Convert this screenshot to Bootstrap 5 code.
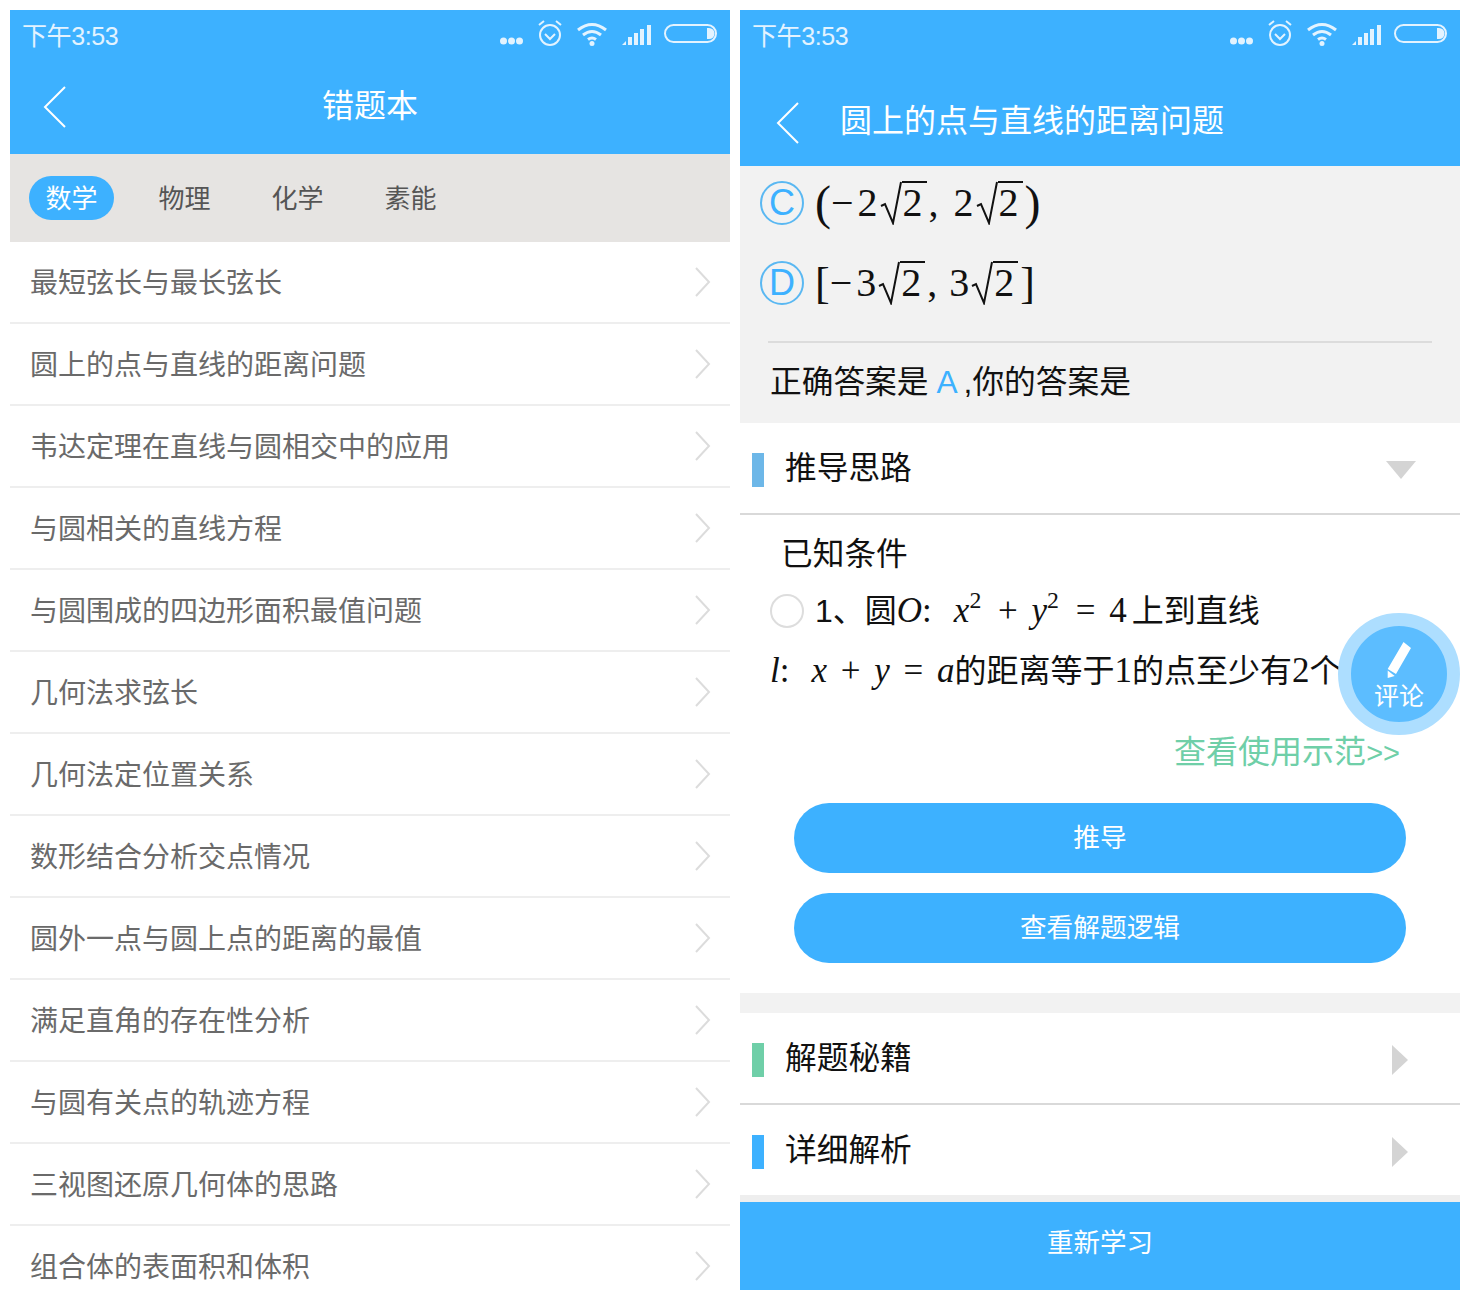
<!DOCTYPE html>
<html lang="zh">
<head>
    <meta charset="UTF-8">
    <title>错题本</title>
    <link href="https://cdn.jsdelivr.net/npm/bootstrap@5.3.3/dist/css/bootstrap.min.css" rel="stylesheet">
    <style>
        body {
            background: #fff;
            font-family: "Liberation Sans", "Noto Sans CJK SC", sans-serif;
            overflow: hidden;
        }
        .screens { width: 1470px; height: 1300px; padding: 10px 10px 0; gap: 10px; }
        .phone { width: 720px; height: 1280px; overflow: hidden; position: relative; flex: none; background: #fff; }
        .phone-left { height: 1290px; }
        .top-blue { background: #3db1ff; color: #fff; }
        .status-row { height: 52px; padding: 0 12px; }
        .status-time { font-size: 25px; color: #e3f3ff; letter-spacing: -.4px; margin-top: 1px; }
        .bar-left { height: 144px; }
        .bar-right { height: 156px; }
        .head-row { height: 92px; }
        .bar-left .head-row { justify-content: center; position: relative; height: 84px; padding-top: 4px; }
        .bar-left .back-ico { position: absolute; left: 33px; top: 24px; }
        .head-title { font-size: 32px; line-height: 1; }
        .bar-right .head-row { padding: 18px 0 0 36px; height: 104px; }
        .bar-right .head-title { margin-left: 40px; font-size: 32px; margin-top: -5px; }

        .subject-tabs { height: 88px; background: #e6e4e2; padding: 0 0 0 19px; }
        .subject-tab { font-size: 26px; color: #555; width: 85px; height: 44px; line-height: 46px; text-align: center; margin-right: 28px; border-radius: 22px; }
        .subject-tab.on { background: #3db1ff; color: #fff; }
        .topic-row { height: 82px; border-bottom: 2px solid #eeeeee; padding: 4px 19px 0 20px; font-size: 28px; color: #6a6a6a; }
        .topic-row svg { margin-top: -4px; }

        .math { font-family: "Liberation Serif", "DejaVu Serif", serif; color: #111; }
        .math i { font-style: italic; }
        .math sup { font-size: .68em; top: -.6em; margin-right: 3px; }
        .rad { display: inline-flex; align-items: flex-start; vertical-align: -9px; margin: 0 2px; }
        .rad svg { flex: none; }
        .rad span { border-top: 2px solid #111; line-height: 40px; padding: 0 4px 0 1px; height: 42px; }
        .opt-comma { margin-right: 15px; }
        .opt-minus { margin: 0 4px 0 0; }
        .opt-brace { font-size: 48px; font-weight: 400; vertical-align: -3px; }
        .opt-square { font-size: 44px; vertical-align: -2px; }
        .opt-second .opt-comma { margin-right: 12px; }

        .answers { background: #f2f2f2; height: 257px; }
        .opt-row { padding-left: 20px; height: 80px; }
        .opt-first { height: 74px; }
        .opt-second { margin-top: 3px; }
        .opt-letter { width: 44px; height: 44px; border: 2px solid #5ab8f2; border-radius: 50%; color: #3db1ff; font-size: 36px; line-height: 40px; text-align: center; flex: none; }
        .opt-math { font-size: 40px; margin-left: 11px; white-space: nowrap; line-height: 1; }
        .answer-rule { margin: 18px 28px 0; border-top: 2px solid #dcdcdc; }
        .answer-line { font-size: 31.700px; color: #111; padding: 17px 0 0 30px; line-height: 44px; }
        .answer-line em { font-style: normal; color: #3db1ff; padding: 0 6px 0 8px; }

        .fold-row { height: 92px; border-bottom: 2px solid #d9d9d9; padding: 4px 0 0 12px; position: relative; }
        .fold-mark { width: 12px; height: 34px; flex: none; }
        .fold-title { font-size: 31.700px; color: #111; margin-left: 21px; margin-top: -2px; }
        .fold-tail { margin-left: auto; }
        .derive-box { height: 478px; position: relative; }
        .known-title { font-size: 31.700px; color: #111; padding: 17px 0 0 41px; line-height: 44px; }
        .step-line { font-size: 32px; color: #111; line-height: 44px; white-space: nowrap; }
        .step-one { padding: 13px 0 0 30px; }
        .step-two { padding: 16px 0 0 30px; }
        .step-radio { width: 34px; height: 34px; border: 2px solid #ddd; border-radius: 50%; margin-right: 11px; flex: none; }
        .step-math { font-size: 35px; word-spacing: 5px; }
        .math-gap { margin-left: 22px; }
        .math-end { margin-right: 5px; }
        .demo-link { font-size: 32px; color: #6fcfa8; text-align: right; padding: 37px 60px 0 0; line-height: 44px; }
        .demo-link span { font-size: 29px; }
        .derive-actions { padding: 28px 54px 0; gap: 20px; }
        .pill-btn { height: 70px; border-radius: 35px; background: #3db1ff; border: 0; color: #fff; font-size: 26.700px; width: 100%; }
        .comment-fab { position: absolute; right: 0; top: 603px; width: 122px; height: 122px; border-radius: 50%; background: #5cbdff; border: 13px solid #addeff; color: #fff; z-index: 3; font-size: 25px; line-height: 1; padding-top: 16px; }
        .comment-fab span { margin-top: 6px; }
        .gap-band { height: 20px; background: #f2f2f2; }
        .restudy-btn { position: absolute; left: 0; right: 0; bottom: 0; height: 88px; line-height: 82px; text-align: center; background: #3db1ff; color: #fff; font-size: 26.500px; }
        .restudy-wrap { position: absolute; left: 0; right: 0; bottom: 88px; height: 7px; background: #eee; }
    </style>
</head>
<body>
<div class="screens d-flex">
    <!-- 错题本 -->
    <div class="phone phone-left">
        <div class="top-blue bar-left">
            <div class="status-row d-flex align-items-center justify-content-between">
                <span class="status-time">下午3:53</span>
                <svg width="220" height="32" viewBox="0 0 220 32" fill="none" stroke="#e3f3ff">
                    <g fill="#e3f3ff" stroke="none"><circle cx="5.500" cy="21" r="3.500"/><circle cx="13.500" cy="21" r="3.500"/><circle cx="21.500" cy="21" r="3.500"/></g>
                    <circle cx="52" cy="15" r="10" stroke-width="2"/><path d="M47 14l5 5 5-5M41 5l5-4M63 5l-5-4" stroke-width="2"/>
                    <path d="M80 10q14-11 28 0M85 15q9-7 18 0M90 19.500q4-3 8 0" stroke-width="3"/><circle cx="94" cy="23.500" r="2.500" fill="#e3f3ff" stroke="none"/>
                    <path d="M124 25l4-4v4zM130 17h4v8h-4zM136 13h4v12h-4zM142 9h4v16h-4zM149 5h4v20h-4z" fill="#e3f3ff" stroke="none"/>
                    <rect x="167" y="5" width="51" height="17" rx="8.500" stroke-width="2"/><path d="M209 8h2a5.500 5.500 0 0 1 0 11h-2z" fill="#e3f3ff" stroke="none"/>
                </svg>
            </div>
            <div class="head-row d-flex align-items-center">
                <svg class="back-ico" width="24" height="42" viewBox="0 0 24 42" fill="none" stroke="#fff" stroke-width="2"><path d="M22 1L2 21l20 20"/></svg>
                <span class="head-title">错题本</span>
            </div>
        </div>
        <div class="subject-tabs d-flex align-items-center">
            <span class="subject-tab on">数学</span><span class="subject-tab">物理</span><span class="subject-tab">化学</span><span class="subject-tab">素能</span>
        </div>
        <div id="topics"></div>
    </div>

    <!-- 题目详情 -->
    <div class="phone">
        <div class="top-blue bar-right">
            <div class="status-row d-flex align-items-center justify-content-between">
                <span class="status-time">下午3:53</span>
                <svg width="220" height="32" viewBox="0 0 220 32" fill="none" stroke="#e3f3ff">
                    <g fill="#e3f3ff" stroke="none"><circle cx="5.500" cy="21" r="3.500"/><circle cx="13.500" cy="21" r="3.500"/><circle cx="21.500" cy="21" r="3.500"/></g>
                    <circle cx="52" cy="15" r="10" stroke-width="2"/><path d="M47 14l5 5 5-5M41 5l5-4M63 5l-5-4" stroke-width="2"/>
                    <path d="M80 10q14-11 28 0M85 15q9-7 18 0M90 19.500q4-3 8 0" stroke-width="3"/><circle cx="94" cy="23.500" r="2.500" fill="#e3f3ff" stroke="none"/>
                    <path d="M124 25l4-4v4zM130 17h4v8h-4zM136 13h4v12h-4zM142 9h4v16h-4zM149 5h4v20h-4z" fill="#e3f3ff" stroke="none"/>
                    <rect x="167" y="5" width="51" height="17" rx="8.500" stroke-width="2"/><path d="M209 8h2a5.500 5.500 0 0 1 0 11h-2z" fill="#e3f3ff" stroke="none"/>
                </svg>
            </div>
            <div class="head-row d-flex align-items-center">
                <svg class="back-ico" width="24" height="42" viewBox="0 0 24 42" fill="none" stroke="#fff" stroke-width="2"><path d="M22 1L2 21l20 20"/></svg>
                <span class="head-title">圆上的点与直线的距离问题</span>
            </div>
        </div>
        <div class="answers">
            <div class="opt-row opt-first d-flex align-items-center">
                <span class="opt-letter">C</span>
                <span class="opt-math math"><span class="opt-brace">(</span><span class="opt-minus">−</span>2<span class="rad"><svg width="22" height="44" viewBox="0 0 22 44" fill="none" stroke="#111"><path d="M1 25l4-2 8 19L21 1" stroke-width="2"/></svg><span>2</span></span><span class="opt-comma">,</span>2<span class="rad"><svg width="22" height="44" viewBox="0 0 22 44" fill="none" stroke="#111"><path d="M1 25l4-2 8 19L21 1" stroke-width="2"/></svg><span>2</span></span><span class="opt-brace">)</span></span>
            </div>
            <div class="opt-row opt-second d-flex align-items-center">
                <span class="opt-letter">D</span>
                <span class="opt-math math"><span class="opt-brace opt-square">[</span><span class="opt-minus">−</span>3<span class="rad"><svg width="22" height="44" viewBox="0 0 22 44" fill="none" stroke="#111"><path d="M1 25l4-2 8 19L21 1" stroke-width="2"/></svg><span>2</span></span><span class="opt-comma">,</span>3<span class="rad"><svg width="22" height="44" viewBox="0 0 22 44" fill="none" stroke="#111"><path d="M1 25l4-2 8 19L21 1" stroke-width="2"/></svg><span>2</span></span><span class="opt-brace opt-square">]</span></span>
            </div>
            <div class="answer-rule"></div>
            <div class="answer-line">正确答案是<em>A</em>,你的答案是</div>
        </div>
        <div class="fold-row d-flex align-items-center">
            <span class="fold-mark" style="background:#6db7e8"></span>
            <span class="fold-title">推导思路</span>
            <svg class="fold-tail" width="30" height="18" viewBox="0 0 30 18" style="margin-right:44px"><path d="M0 0h30L15 18z" fill="#d4d4d4"/></svg>
        </div>
        <div class="derive-box">
            <div class="known-title">已知条件</div>
            <div class="step-line step-one d-flex align-items-center">
                <span class="step-radio"></span><span>1、圆<span class="math step-math"><i>O</i>:<i class="math-gap">x</i><sup>2</sup> + <i>y</i><sup>2</sup> = <span class="math-end">4</span></span>上到直线</span>
            </div>
            <div class="step-line step-two"><span class="math step-math"><i>l</i>:<i class="math-gap">x</i> + <i>y</i> = <i>a</i></span>的距离等于<span class="math step-math">1</span>的点至少有<span class="math step-math">2</span>个</div>
            <div class="demo-link">查看使用示范<span>&gt;&gt;</span></div>
            <div class="derive-actions d-flex flex-column">
                <button class="btn pill-btn">推导</button>
                <button class="btn pill-btn">查看解题逻辑</button>
            </div>
        </div>
        <div class="gap-band"></div>
        <div class="fold-row d-flex align-items-center">
            <span class="fold-mark" style="background:#6fcfa8"></span>
            <span class="fold-title">解题秘籍</span>
            <svg class="fold-tail" width="16" height="30" viewBox="0 0 16 30" style="margin-right:52px"><path d="M0 0l16 15L0 30z" fill="#d4d4d4"/></svg>
        </div>
        <div class="fold-row d-flex align-items-center">
            <span class="fold-mark" style="background:#3db1ff"></span>
            <span class="fold-title">详细解析</span>
            <svg class="fold-tail" width="16" height="30" viewBox="0 0 16 30" style="margin-right:52px"><path d="M0 0l16 15L0 30z" fill="#d4d4d4"/></svg>
        </div>
        <div class="restudy-wrap"></div>
        <div class="restudy-btn">重新学习</div>
        <div class="comment-fab d-flex flex-column align-items-center">
            <svg width="25" height="36" viewBox="0 0 25 36"><path d="M24 6L16.500 0 .700 27 9 32zM.700 28.500l7 5.500-7 2z" fill="#fff"/></svg>
            <span>评论</span>
        </div>
    </div>
</div>
<script src="https://cdn.jsdelivr.net/npm/bootstrap@5.3.3/dist/js/bootstrap.bundle.min.js"></script>
<script>
    var topics = ['最短弦长与最长弦长', '圆上的点与直线的距离问题', '韦达定理在直线与圆相交中的应用', '与圆相关的直线方程', '与圆围成的四边形面积最值问题', '几何法求弦长', '几何法定位置关系', '数形结合分析交点情况', '圆外一点与圆上点的距离的最值', '满足直角的存在性分析', '与圆有关点的轨迹方程', '三视图还原几何体的思路', '组合体的表面积和体积'];
    var html = '';
    topics.forEach(function (t) {
        html += '<div class="topic-row d-flex align-items-center justify-content-between"><span>' + t + '</span>' +
            '<svg width="16" height="30" viewBox="0 0 16 30" fill="none" stroke="#dcdcdc" stroke-width="2"><path d="M1 1l13 14L1 29"/></svg></div>';
    });
    document.getElementById('topics').innerHTML = html;
</script>
</body>
</html>
